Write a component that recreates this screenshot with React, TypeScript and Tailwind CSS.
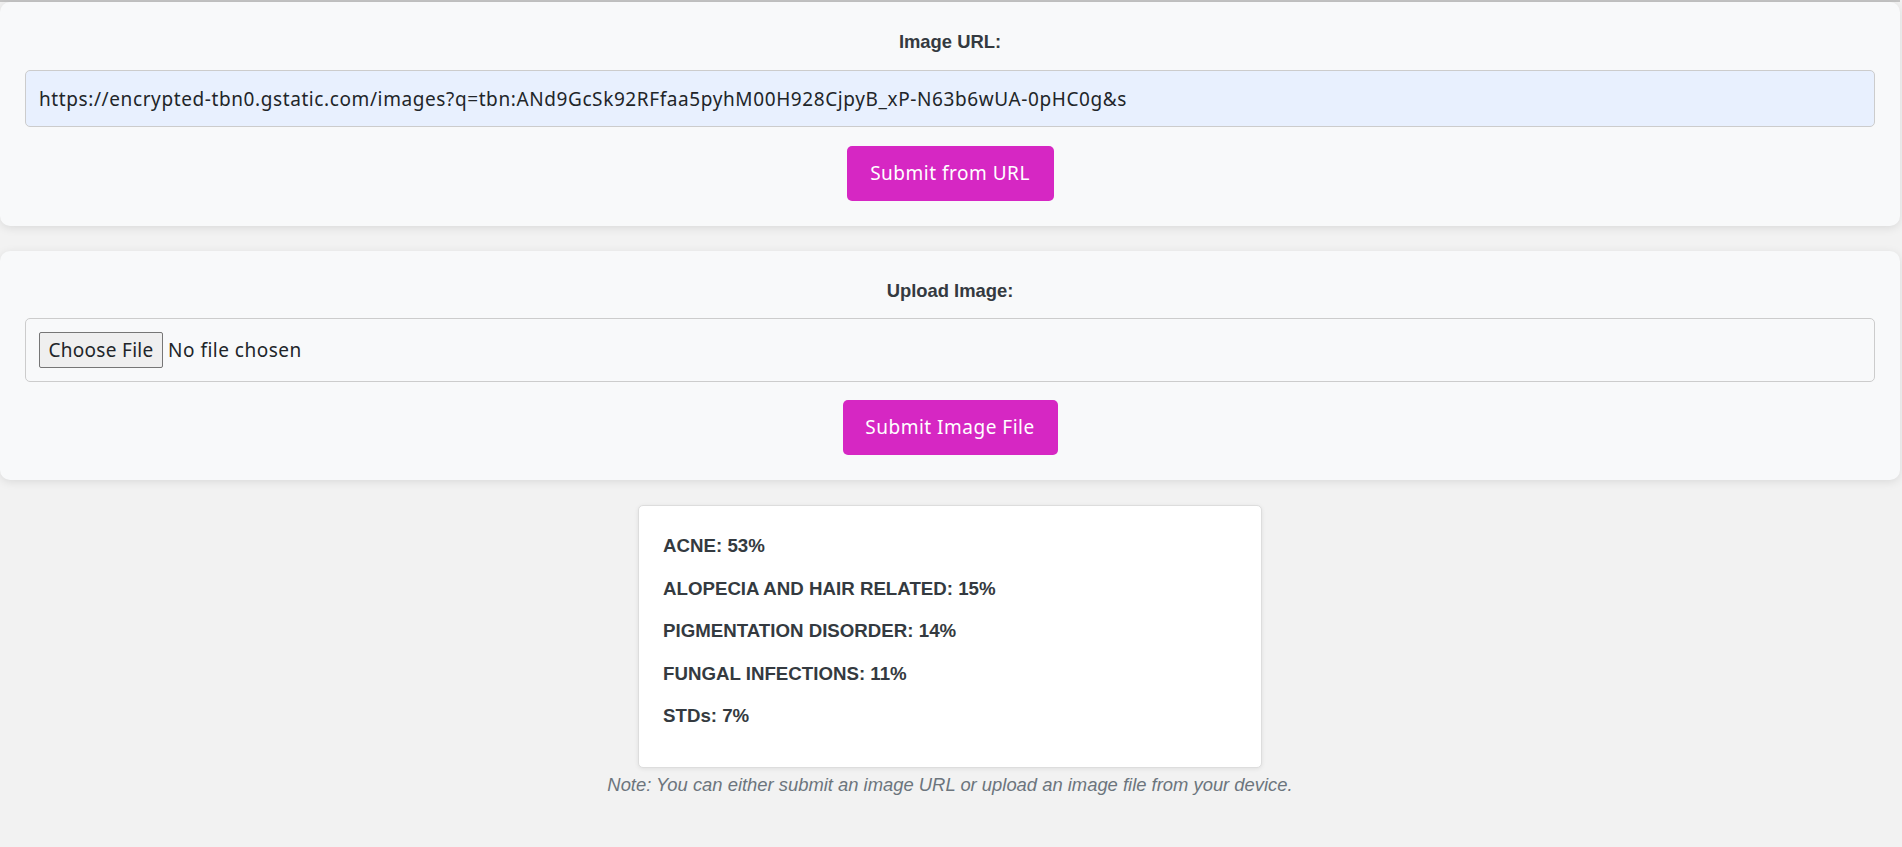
import React, { useState } from 'react';

const results = [
  { label: 'ACNE', value: 53 },
  { label: 'ALOPECIA AND HAIR RELATED', value: 15 },
  { label: 'PIGMENTATION DISORDER', value: 14 },
  { label: 'FUNGAL INFECTIONS', value: 11 },
  { label: 'STDs', value: 7 },
];

const App = () => {
  const [url, setUrl] = useState(
    'https://encrypted-tbn0.gstatic.com/images?q=tbn:ANd9GcSk92RFfaa5pyhM00H928CjpyB_xP-N63b6wUA-0pHC0g&s'
  );

  return (
    <div className="min-h-screen bg-[#f2f2f2] font-['Noto_Sans',sans-serif]">
      <div className="w-[1900px] border-t-2 border-[#c4c4c4]">
        {/* URL form */}
        <div className="bg-[#f8f9fa] rounded-[10px] shadow-[0_2px_10px_rgba(0,0,0,0.1)] p-[25px] flex flex-col items-center">
          <label className="h-[30px] leading-[30px] text-[18.4px] font-bold text-[#343a40] font-['Liberation_Sans',Arial,sans-serif]">
            Image URL:
          </label>
          <input
            type="text"
            value={url}
            onChange={(e) => setUrl(e.target.value)}
            className="mt-[13px] w-full h-[57px] px-[13px] bg-[#e8f0fe] border border-[#cccccc] rounded-[5px] text-[19px] tracking-[0.6px] text-[#212529] outline-none"
          />
          <button className="mt-[19px] w-[207px] h-[55px] bg-[#d627c3] text-white text-[19px] tracking-[0.5px] rounded-[5px]">
            Submit from URL
          </button>
        </div>

        {/* File form */}
        <div className="mt-[25px] bg-[#f8f9fa] rounded-[10px] shadow-[0_2px_10px_rgba(0,0,0,0.1)] p-[25px] flex flex-col items-center">
          <label className="h-[30px] leading-[30px] text-[18.4px] font-bold text-[#343a40] font-['Liberation_Sans',Arial,sans-serif]">
            Upload Image:
          </label>
          <div className="mt-3 w-full h-[64px] flex items-center px-[13px] border border-[#cccccc] rounded-[5px]">
            <input
              type="file"
              className="text-[19px] tracking-[0.5px] text-[#212529] file:mr-[5px] file:h-[36px] file:w-[124px] file:bg-[#efefef] file:border file:border-[#767676] file:rounded-[2px] file:text-[#212529] file:tracking-[0.3px]"
            />
          </div>
          <button className="mt-[18px] w-[215px] h-[55px] bg-[#d627c3] text-white text-[19px] tracking-[0.5px] rounded-[5px]">
            Submit Image File
          </button>
        </div>

        {/* Prediction results */}
        <div className="mt-[25px] flex flex-col items-center font-['Liberation_Sans',Arial,sans-serif]">
          <div className="w-[624px] bg-white border border-[#dddddd] rounded-[5px] shadow-[0_1px_4px_rgba(0,0,0,0.08)] pt-[26px] pb-[22px] px-[24px]">
            {results.map((r) => (
              <p key={r.label} className="mb-[15px] leading-[27.6px] text-[18.7px] font-bold text-[#343a40]">
                {r.label}: {r.value}%
              </p>
            ))}
          </div>
          <p className="mt-[3px] leading-[27.6px] text-[18.4px] italic text-[#6c757d]">
            Note: You can either submit an image URL or upload an image file from your device.
          </p>
        </div>
      </div>
    </div>
  );
};

export default App;
